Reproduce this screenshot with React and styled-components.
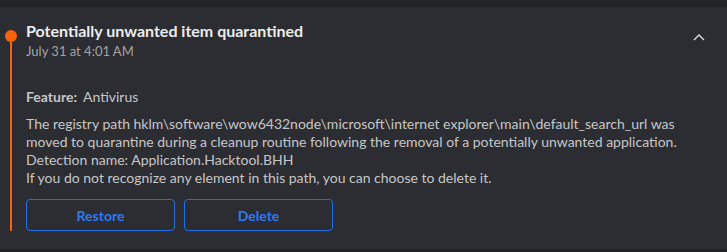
import React from 'react';
import styled, { createGlobalStyle } from 'styled-components';

const GlobalStyle = createGlobalStyle`
  html, body {
    margin: 0;
    padding: 0;
    background: #222327;
  }
  body {
    font-family: Lato, "Noto Sans", sans-serif;
  }
`;

const Page = styled.div`
  width: 727px;
  height: 252px;
  background: #222327;
  padding-top: 7px;
  box-sizing: border-box;
`;

const Panel = styled.div`
  height: 242px;
  background: #2c2d32;
  display: flex;
`;

const Rail = styled.div`
  width: 26px;
  display: flex;
  flex-direction: column;
  align-items: center;
  padding-top: 23px;
  padding-bottom: 18px;
  box-sizing: border-box;
`;

const Dot = styled.div`
  width: 12px;
  height: 12px;
  border-radius: 50%;
  background: #f7630c;
  margin-left: -4px;
`;

const Line = styled.div`
  flex: 1;
  width: 2px;
  background: #f7630c;
  margin-left: -4px;
  margin-top: -2px;
`;

const Content = styled.div`
  flex: 1;
  padding-top: 13px;
`;

const Header = styled.div`
  display: flex;
  justify-content: space-between;
  align-items: flex-start;
`;

const Title = styled.div`
  font-size: 16px;
  font-weight: 700;
  color: #ececec;
  line-height: 22px;
`;

const Date = styled.div`
  font-size: 13px;
  color: #a3a3a6;
  line-height: 18px;
`;

const Chevron = styled.svg`
  margin-right: 22px;
  margin-top: 13px;
`;

const FeatureRow = styled.div`
  margin-top: 27px;
  font-size: 14px;
  color: #c6c6c8;
  line-height: 20px;
`;

const Label = styled.span`
  font-weight: 700;
  margin-right: 6px;
`;

const Body = styled.div`
  margin-top: 8px;
  font-size: 14px;
  color: #c6c6c8;
  line-height: 18px;
  padding-right: 30px;
`;

const Actions = styled.div`
  display: flex;
  gap: 9px;
  margin-top: 12px;
`;

const Button = styled.button`
  width: 149px;
  height: 32px;
  background: transparent;
  border: 1px solid #1f6fe8;
  border-radius: 4px;
  color: #2b7bf6;
  font-family: inherit;
  font-size: 14px;
  font-weight: 700;
  cursor: pointer;
`;

export default function App() {
  return (
    <Page>
      <GlobalStyle />
      <Panel>
        <Rail>
          <Dot />
          <Line />
        </Rail>
        <Content>
          <Header>
            <div>
              <Title>Potentially unwanted item quarantined</Title>
              <Date>July 31 at 4:01 AM</Date>
            </div>
            <Chevron width="12" height="8" viewBox="0 0 12 8">
              <path d="M1 7 L6 2 L11 7" fill="none" stroke="#e0e0e0" strokeWidth="1.3" />
            </Chevron>
          </Header>
          <FeatureRow>
            <Label>Feature:</Label>Antivirus
          </FeatureRow>
          <Body>
            The registry path hklm\software\wow6432node\microsoft\internet explorer\main\default_search_url was moved to quarantine during a cleanup routine following the removal of a potentially unwanted application.
            <br />
            Detection name: Application.Hacktool.BHH
            <br />
            If you do not recognize any element in this path, you can choose to delete it.
          </Body>
          <Actions>
            <Button>Restore</Button>
            <Button>Delete</Button>
          </Actions>
        </Content>
      </Panel>
    </Page>
  );
}
